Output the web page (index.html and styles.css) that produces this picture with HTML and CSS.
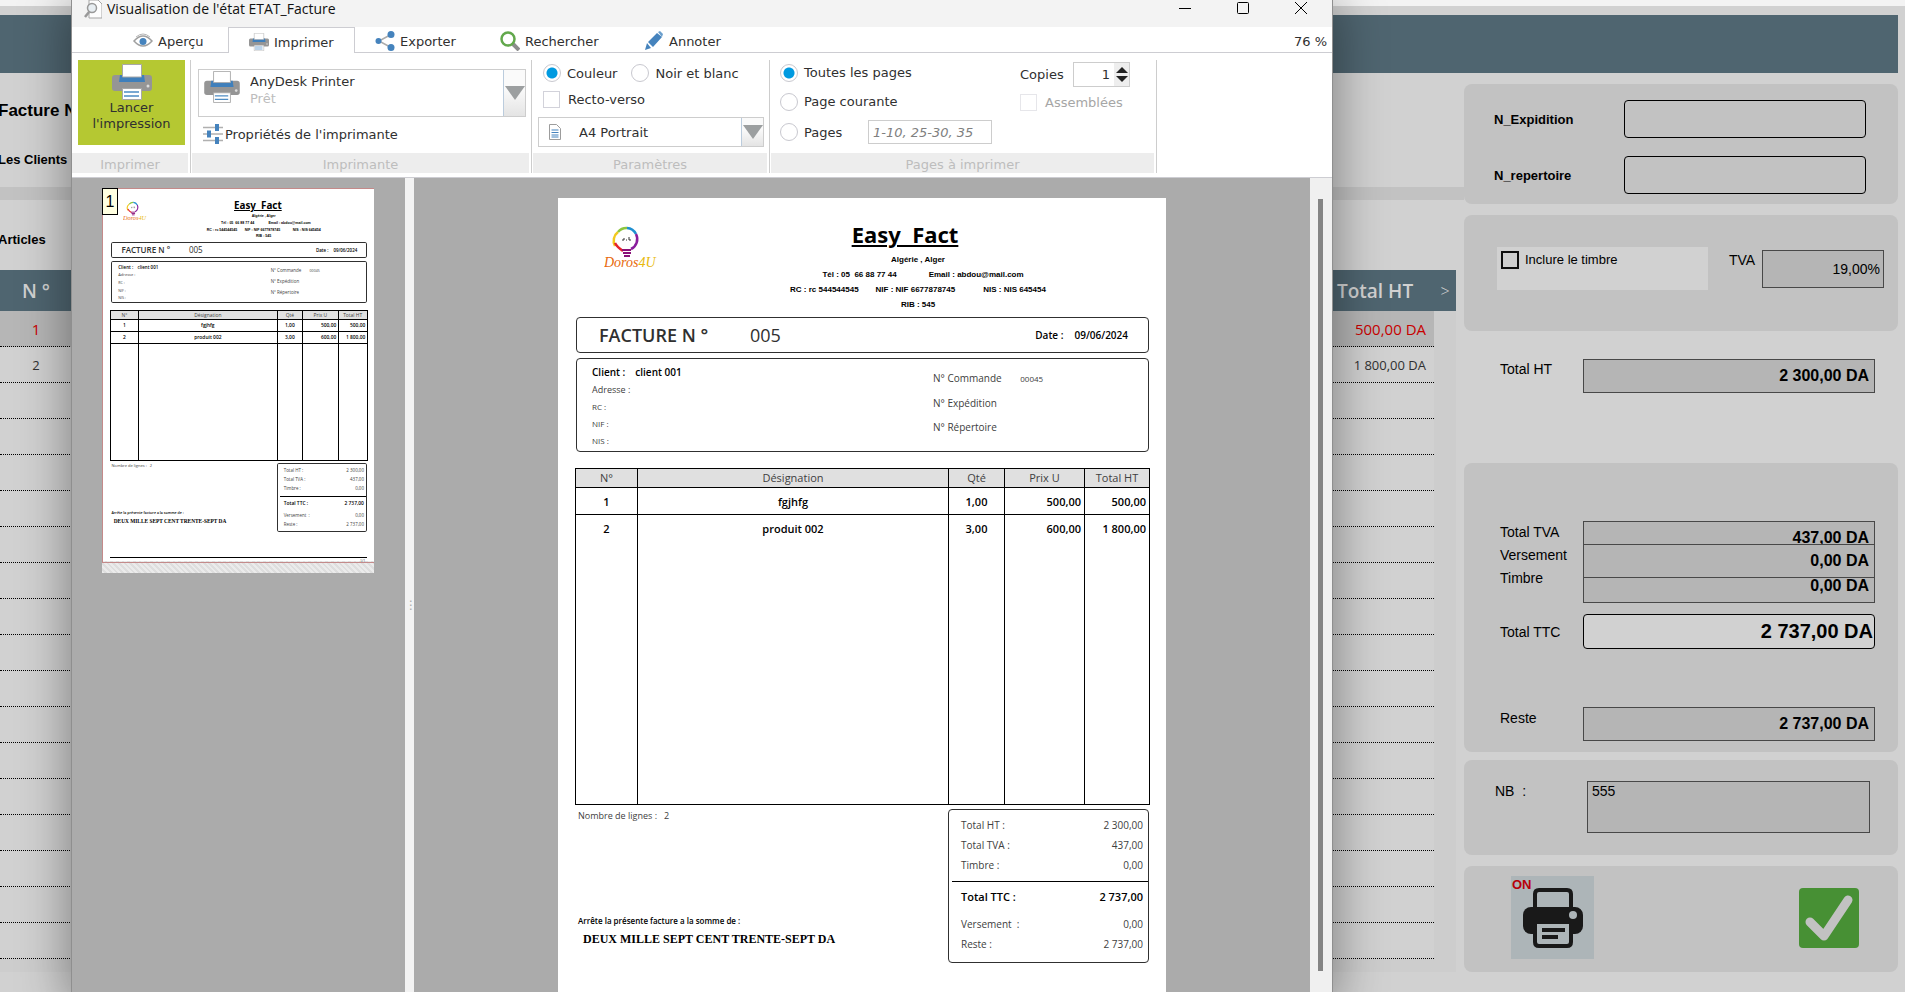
FILE: index.html
```html
<!DOCTYPE html>
<html lang="fr">
<head>
<meta charset="utf-8">
<title>Visualisation de l'état ETAT_Facture</title>
<link rel="stylesheet" href="styles.css">
</head>
<body>
<svg class="defs" aria-hidden="true">
  <symbol id="printer" viewBox="0 0 40 36">
    <path d="M3 11h34a3 3 0 0 1 3 3v10a3 3 0 0 1-3 3H3a3 3 0 0 1-3-3V14a3 3 0 0 1 3-3z" fill="#959595"/>
    <path d="M8 11h24l1 7H7z" fill="#3f7fbb"/>
    <path d="M10.500 .5h19v12.500h-19z" fill="#fff" stroke="#a8a8a8"/>
    <path d="M10.500 24.500h19v11h-19z" fill="#fff" stroke="#a8a8a8"/>
    <path d="M12 28h15M12 32h15" stroke="#4d8cc4" stroke-width="1.500"/>
    <circle cx="36" cy="22" r="1.500" fill="#ddd"/>
  </symbol>
</svg>

<div class="app">
  <div class="app-top"></div>
  <div class="app-bar"></div>
  <div class="app-body">
    <main class="app-main">
      <section class="head-left">
        <h1>Facture N°</h1>
        <h2>Les Clients</h2>
      </section>
      <div class="band"></div>
      <h2 class="articles">Articles</h2>
      <div class="lines">
        <table>
          <thead><tr><th class="c-num">N °</th><th></th><th class="c-tot">Total HT</th><th class="c-bar">&gt;</th></tr></thead>
          <tbody>
            <tr class="sel"><td>1</td><td></td><td>500,00 DA</td></tr>
            <tr><td>2</td><td></td><td>1 800,00 DA</td></tr>
            <tr><td></td><td></td><td></td></tr><tr><td></td><td></td><td></td></tr>
            <tr><td></td><td></td><td></td></tr><tr><td></td><td></td><td></td></tr>
            <tr><td></td><td></td><td></td></tr><tr><td></td><td></td><td></td></tr>
            <tr><td></td><td></td><td></td></tr><tr><td></td><td></td><td></td></tr>
            <tr><td></td><td></td><td></td></tr><tr><td></td><td></td><td></td></tr>
            <tr><td></td><td></td><td></td></tr><tr><td></td><td></td><td></td></tr>
            <tr><td></td><td></td><td></td></tr><tr><td></td><td></td><td></td></tr>
            <tr><td></td><td></td><td></td></tr><tr><td></td><td></td><td></td></tr>
          </tbody>
        </table>
      </div>
    </main>

    <aside class="side">
      <section class="panel refs">
        <label for="exp">N_Expidition</label><input id="exp" type="text">
        <label for="rep">N_repertoire</label><input id="rep" type="text">
      </section>
      <section class="panel tax">
        <label class="stamp"><input type="checkbox"> Inclure le timbre</label>
        <label class="tva-label" for="tva">TVA</label>
        <input id="tva" class="money small" type="text" value="19,00%">
      </section>
      <section class="free">
        <label for="tht">Total HT</label><input id="tht" class="money" type="text" value="2 300,00 DA">
      </section>
      <section class="panel totals">
        <div class="stack">
          <div class="stack-labels">
            <label for="ttva">Total TVA</label><label for="vers">Versement</label><label for="timb">Timbre</label>
          </div>
          <div class="stack-fields">
            <input id="ttva" class="money cut-low" type="text" value="437,00 DA">
            <input id="vers" class="money" type="text" value="0,00 DA">
            <input id="timb" class="money cut-high" type="text" value="0,00 DA">
          </div>
        </div>
        <div class="pair ttc"><label for="ttc">Total TTC</label><input id="ttc" class="big" type="text" value="2 737,00 DA"></div>
        <div class="pair rest"><label for="reste">Reste</label><input id="reste" class="money" type="text" value="2 737,00 DA"></div>
      </section>
      <section class="panel note">
        <label for="nb">NB &nbsp;:</label><textarea id="nb">555</textarea>
      </section>
      <section class="panel actions">
        <button class="print-on" type="button" aria-label="Impression ON">
          <span>ON</span>
          <svg viewBox="0 0 60 60" width="60" height="60">
            <path d="M8 19h44a8 8 0 0 1 8 8v11a8 8 0 0 1-8 8H8a8 8 0 0 1-8-8V27a8 8 0 0 1 8-8z" fill="#191919"/>
            <path d="M12 20V6q0-4 4-4h28q4 0 4 4v14" fill="#adb5b8" stroke="#191919" stroke-width="4"/>
            <path d="M10 19h40v12H10z" fill="#191919"/>
            <path d="M12 34h36v20q0 4-4 4H16q-4 0-4-4z" fill="#adb5b8" stroke="#191919" stroke-width="4"/>
            <path d="M10 30h40v4H10z" fill="#191919"/>
            <path d="M19 42h23M19 49h16" stroke="#191919" stroke-width="4"/>
            <circle cx="50" cy="27" r="4" fill="#adb5b8"/>
          </svg>
        </button>
        <button class="ok" type="button" aria-label="Valider">
          <svg viewBox="0 0 60 60" width="60" height="60">
            <rect width="60" height="60" rx="4" fill="#479034"/>
            <path d="M11 34L25 48 49 12" fill="none" stroke="#c2c2c2" stroke-width="9" stroke-linejoin="round" stroke-linecap="round"/>
          </svg>
        </button>
      </section>
    </aside>
  </div>
</div>

<div class="window">
  <header class="titlebar">
    <svg class="doc-find" viewBox="0 0 18 20" width="18" height="20"><path d="M5 0h9l4 4v14H5z" fill="#fdfdfd" stroke="#a5a5a5"/><circle cx="8" cy="8" r="4.500" fill="#e8eef2" stroke="#999" stroke-width="1.500"/><path d="M5 12l-4 5" stroke="#999" stroke-width="2.500"/></svg>
    <span class="caption">Visualisation de l'état ETAT_Facture</span>
    <button type="button" aria-label="Réduire"><svg width="14" height="14"><path d="M1 7.500h12" stroke="#000"/></svg></button>
    <button type="button" aria-label="Agrandir"><svg width="14" height="14"><rect x="1.500" y="1.500" width="11" height="11" rx="1" fill="none" stroke="#000"/></svg></button>
    <button type="button" aria-label="Fermer"><svg width="14" height="14"><path d="M1 1l12 12M13 1L1 13" stroke="#000"/></svg></button>
  </header>

  <nav class="tabs">
    <button class="tab t1" type="button"><svg viewBox="0 0 20 20" width="20" height="20"><path d="M1 10q9-10 18 0-9 10-18 0z" fill="#fff" stroke="#a0a0a0" stroke-width="1.500"/><circle cx="10" cy="10.500" r="3.500" fill="#4583bd"/><path d="M3 6q7-6 14 0" fill="none" stroke="#b5b5b5"/></svg>Aperçu</button>
    <button class="tab t2 active" type="button"><svg width="20" height="18"><use href="#printer"/></svg>Imprimer</button>
    <button class="tab t3" type="button"><svg viewBox="0 0 20 20" width="20" height="20"><path d="M16 3.500L4 10l12 6.500" fill="none" stroke="#ababab" stroke-width="1.500"/><circle cx="16" cy="3.500" r="3.500" fill="#4583bd"/><circle cx="3.500" cy="10" r="3" fill="#4583bd"/><circle cx="16" cy="16.500" r="3.500" fill="#4583bd"/></svg>Exporter</button>
    <button class="tab t4" type="button"><svg viewBox="0 0 20 20" width="20" height="20"><path d="M13 13l6 6" stroke="#8c8c8c" stroke-width="4"/><circle cx="8" cy="8" r="6.500" fill="#fff" stroke="#62a84c" stroke-width="2.500"/></svg>Rechercher</button>
    <button class="tab t5" type="button"><svg viewBox="0 0 20 20" width="20" height="20"><path d="M1 19l2-7 4 5zM4 11L13 2l5 4-9 10z" fill="#4583bd"/><path d="M14 1l2-1 3 3-1 3z" fill="#6b9fcd"/></svg>Annoter</button>
    <span class="zoom">76 %</span>
  </nav>

  <div class="ribbon">
    <section class="group g1">
      <div class="group-body"><button class="launch" type="button"><svg width="40" height="36"><use href="#printer"/></svg><span>Lancer</span><span>l'impression</span></button></div>
      <h3>Imprimer</h3>
    </section>
    <section class="group g2">
      <div class="group-body">
        <div class="combo printer-combo">
          <svg width="36" height="32"><use href="#printer"/></svg>
          <div class="printer-text"><select aria-label="Imprimante"><option>AnyDesk Printer</option></select><span>Prêt</span></div>
          <i class="arrow"></i>
        </div>
        <button class="props" type="button"><svg viewBox="0 0 20 20" width="20" height="20"><path d="M0 3.500h20M0 10h20M0 16.500h20" stroke="#b0b0b0" stroke-width="1.500"/><path d="M14 0v7M6 6.500v7M14 13v7" stroke="#4583bd" stroke-width="4"/></svg>Propriétés de l'imprimante</button>
      </div>
      <h3>Imprimante</h3>
    </section>
    <section class="group g3">
      <div class="group-body">
        <div class="modes"><label><input type="radio" name="mode" checked>Couleur</label><label><input type="radio" name="mode">Noir et blanc</label></div>
        <label class="duplex"><input type="checkbox">Recto-verso</label>
        <div class="combo paper">
          <svg viewBox="0 0 12 16" width="12" height="16"><path d="M.5.500h7l4 4v11H.5z" fill="#fff" stroke="#9c9c9c"/><path d="M2.500 6h7M2.500 8.500h7M2.500 11h7M2.500 13h7" stroke="#4583bd"/></svg>
          <select aria-label="Format"><option>A4 Portrait</option></select>
          <i class="arrow"></i>
        </div>
      </div>
      <h3>Paramètres</h3>
    </section>
    <section class="group g4">
      <div class="group-body pages">
        <div class="ranges">
          <label><input type="radio" name="range" checked>Toutes les pages</label>
          <label><input type="radio" name="range">Page courante</label>
          <div class="range"><label><input type="radio" name="range">Pages</label><input class="range-text" type="text" aria-label="Intervalle de pages" placeholder="1-10, 25-30, 35"></div>
        </div>
        <div class="copies">
          <div class="count"><label for="copies">Copies</label><div class="spin"><input id="copies" type="text" value="1"><span><i class="up"></i><i class="down"></i></span></div></div>
          <label class="off"><input type="checkbox" disabled>Assemblées</label>
        </div>
      </div>
      <h3>Pages à imprimer</h3>
    </section>
  </div>

  <div class="viewer">
    <div class="thumbs">
      <div class="thumb"><div class="mini"></div><b class="badge">1</b></div>
    </div>
    <div class="splitter">⋮</div>
    <div class="preview">
      <article class="sheet">
        <header class="sheet-head">
          <svg class="logo" viewBox="0 0 56 44" width="56" height="44">
            <g fill="none" stroke-width="2.500" transform="translate(2 0)">
              <path d="M9 21A11 11 0 0 1 12 7" stroke="#f2c91f"/><path d="M12 7a11 11 0 0 1 9-4" stroke="#8ec63f"/><path d="M21 3a11 11 0 0 1 9 6" stroke="#1f8fd0"/><path d="M30 9a11 11 0 0 1-5 15" stroke="#8a1d9c"/><path d="M9 18q2 4 8 8" stroke="#e5232c"/>
            </g>
            <path d="M18 25h9M19 28h8M20 31h6" stroke="#8a1179" stroke-width="2"/>
            <path d="M18 15h2v-2M22 15h1M25 12v3h2" stroke="#333" fill="none"/>
            <text x="0" y="42" fill="#e8690b">Doros<tspan fill="#e8b90b">4U</tspan></text>
          </svg>
          <div class="company">
            <h2>Easy&nbsp; Fact</h2>
            <p>Algérie , Alger</p>
            <p class="gap-l"><span>Tél : 05 &nbsp;66 88 77 44</span><span>Email : abdou@mail.com</span></p>
            <p class="gap-s"><span>RC : rc 544544545</span><span>NIF : NIF 6677878745</span><span class="nis">NIS : NIS 645454</span></p>
            <p>RIB : 545</p>
          </div>
        </header>
        <div class="box number"><b>FACTURE N °</b><span>005</span><time><span>Date :</span><span>09/06/2024</span></time></div>
        <div class="box client">
          <div class="who"><p class="name"><b>Client :</b><b>client 001</b></p><p class="addr">Adresse :</p><p>RC :</p><p>NIF :</p><p>NIS :</p></div>
          <div class="docs"><p>N° Commande <small>00045</small></p><p>N° Expédition</p><p>N° Répertoire</p></div>
        </div>
        <table class="items">
          <colgroup><col class="w1"><col class="w2"><col class="w3"><col class="w4"><col class="w5"></colgroup>
          <thead><tr><th>N°</th><th>Désignation</th><th>Qté</th><th>Prix U</th><th>Total HT</th></tr></thead>
          <tbody>
            <tr class="line"><td>1</td><td>fgjhfg</td><td>1,00</td><td>500,00</td><td>500,00</td></tr>
            <tr><td>2</td><td>produit 002</td><td>3,00</td><td>600,00</td><td>1 800,00</td></tr>
            <tr class="rest-rows"><td></td><td></td><td></td><td></td><td></td></tr>
          </tbody>
        </table>
        <div class="below">
          <div class="words">
            <p class="nb-lines">Nombre de lignes : &nbsp; 2</p>
            <div><p class="stop">Arrête la présente facture a la somme de :</p><p class="amount">DEUX MILLE SEPT CENT TRENTE-SEPT DA</p></div>
          </div>
          <dl class="box sums">
            <div><dt>Total HT :</dt><dd>2 300,00</dd></div>
            <div><dt>Total TVA :</dt><dd>437,00</dd></div>
            <div><dt>Timbre :</dt><dd>0,00</dd></div>
            <div class="ttc-row"><dt>Total TTC :</dt><dd>2 737,00</dd></div>
            <div><dt>Versement &nbsp;:</dt><dd>0,00</dd></div>
            <div><dt>Reste :</dt><dd>2 737,00</dd></div>
          </dl>
        </div>
        <footer class="sheet-foot">1/1</footer>
      </article>
    </div>
    <div class="scroll"><div class="thumb-bar"></div></div>
  </div>
</div>
<script src="script.js"></script>
</body>
</html>
```
FILE: script.js
```js
// The page thumbnail is a reduced copy of the invoice sheet.
document.querySelector('.mini').append(document.querySelector('.sheet').cloneNode(true));
```
FILE: styles.css
```css
* { box-sizing: border-box; }
body { margin: 0; height: 100vh; overflow: hidden; position: relative; background: #d1d1d1; font-family: "Liberation Sans", sans-serif; font-size: 14px; color: #000; }
h1, h2, h3, p, dl, dd { margin: 0; }
button { font: inherit; color: inherit; border: 0; background: none; padding: 0; }
input, select, textarea { font: inherit; color: inherit; margin: 0; }
svg { display: block; flex: none; }
.defs { position: absolute; width: 0; height: 0; }

/* Invoice form behind the preview window */
.app-top { height: 6px; background: #f3f3f3; }
.app-bar { height: 58px; margin: 9px 7px 0 0; background: #4f6570; }
.app-body { display: flex; padding-right: 7px; }
.app-main { flex: 1; min-width: 0; }
.head-left { height: 114px; padding-top: 27px; }
.head-left h1 { font-size: 17px; line-height: 22px; }
.head-left h2 { font-size: 13px; line-height: 20px; margin-top: 28px; }
.head-left h1, .head-left h2, .articles { margin-left: -2px; }
.band { height: 13px; background: #c2c2c2; }
.articles { font-size: 13px; line-height: 20px; height: 70px; padding-top: 30px; }
.lines { margin-right: 8px; height: 702px; background: #cdcdcd; }
.lines table { width: 100%; border-collapse: separate; border-spacing: 0; table-layout: fixed; font-family: "Open Sans", sans-serif; }
.lines th { height: 41px; padding: 0; background: #4f6570; color: #d1d1d1; font-size: 19px; font-weight: 600; }
.c-num { width: 72px; }
.lines .c-tot { width: 102px; padding-left: 5px; text-align: left; }
.lines .c-bar { width: 22px; font-size: 16px; font-weight: 300; }
.lines tbody { color: #303030; font-size: 13px; }
.lines td { height: 36px; padding: 0; text-align: center; border-bottom: 1px dotted #000; background: #d1d1d1; }
.lines td:last-child { text-align: right; padding-right: 8px; }
.lines .sel td { background: #b6b6b6; color: #c80000; font-size: 15px; }

.side { width: 434px; padding-top: 11px; }
.panel { background: #c2c2c2; border-radius: 8px; }
.refs { height: 120px; padding: 16px 32px 0 30px; display: grid; grid-template-columns: 130px 1fr; grid-auto-rows: 38px; row-gap: 18px; align-items: center; font-size: 13px; font-weight: bold; margin-bottom: 11px; }
.refs input { height: 38px; background: none; border: 1px solid #000; border-radius: 4px; }
.tax { height: 116px; padding: 32px 14px 0 33px; display: flex; align-items: flex-start; }
.stamp { width: 211px; height: 43px; background: #d1d1d1; padding: 4px; display: flex; align-items: flex-start; gap: 6px; font-size: 13px; line-height: 18px; }
.stamp input { appearance: none; width: 18px; height: 18px; border: 2px solid #111; }
.tva-label { margin-left: 21px; line-height: 26px; }
.money { height: 34px; width: 100%; background: #b5b5b5; border: 1px solid #484848; padding: 0 5px; text-align: right; font-size: 16px; font-weight: bold; border-radius: 0; }
.tax .small { width: 122px; height: 38px; margin: 3px 0 0 auto; padding: 0 3px; font-size: 14px; font-weight: normal; }
.free { height: 132px; padding: 28px 23px 0 36px; display: grid; grid-template-columns: 83px 1fr; align-items: start; }
.free label { line-height: 20px; }
.totals { height: 289px; padding: 58px 23px 0 36px; margin-bottom: 8px; }
.stack { display: grid; grid-template-columns: 83px 1fr; }
.stack-labels { display: flex; flex-direction: column; gap: 7px; padding-top: 3px; line-height: 16px; }
.stack-fields { display: flex; flex-direction: column; }
.stack-fields .cut-low { height: 24px; padding-top: 9px; }
.stack-fields .money + .money { margin-top: -1px; }
.stack-fields .cut-high { height: 26px; padding-bottom: 9px; }
.pair { display: grid; grid-template-columns: 83px 1fr; }
.ttc { margin-top: 11px; align-items: center; }
.big { width: 100%; height: 35px; background: #d1d1d1; border: 1px solid #000; border-radius: 4px; padding: 0 1px; text-align: right; font-size: 20px; font-weight: bold; }
.rest { margin-top: 58px; line-height: 22px; }
.note { height: 95px; padding: 21px 28px 0 31px; display: grid; grid-template-columns: 92px 1fr; align-items: start; line-height: 20px; margin-bottom: 11px; }
.note textarea { height: 52px; resize: none; background: #b5b5b5; border: 1px solid #484848; padding: 1px 4px; line-height: 16px; }
.actions { height: 106px; padding: 10px 39px 0 47px; display: flex; justify-content: space-between; align-items: flex-start; }
.print-on { position: relative; width: 83px; height: 83px; background: #adb5b8; display: grid; place-items: center; }
.print-on span { position: absolute; left: 1px; top: 1px; font-size: 13px; font-weight: bold; color: #b8000a; }
.ok { margin-top: 12px; }

/* Preview window */
.window { position: absolute; top: 0; bottom: 0; left: 72px; right: 573px; display: flex; flex-direction: column; background: #fff; box-shadow: 0 0 0 1px #8f8f8f, 0 8px 44px 6px rgba(0, 0, 0, .36); font-family: "DejaVu Sans", sans-serif; font-size: 13px; color: #303030; }
.titlebar { height: 27px; flex: none; background: #f3f3f3; display: flex; align-items: flex-start; padding: 0 2px 0 12px; color: #111; }
.caption { flex: 1; margin-left: 5px; font-family: "Open Sans", sans-serif; font-size: 14px; line-height: 17px; }
.titlebar button { width: 58px; height: 16px; display: grid; place-items: center; }
.tabs { height: 26px; flex: none; display: flex; align-items: stretch; border-bottom: 1px solid #cdcdd2; }
.tab { display: flex; align-items: center; gap: 5px; padding-top: 3px; }
.t1 { width: 156px; padding-left: 61px; }
.tab.active { width: 127px; padding-left: 20px; border: 1px solid #cdcdd2; border-bottom: 0; background: #fff; margin-bottom: -1px; }
.t3 { width: 125px; padding-left: 20px; }
.t4 { width: 144px; padding-left: 20px; }
.t5 { padding-left: 20px; }
.zoom { margin-left: auto; align-self: center; padding: 3px 5px 0 0; }
.ribbon { height: 125px; flex: none; display: flex; padding-top: 7px; border-bottom: 1px solid #cdcdd2; }
.group { height: 113px; display: flex; flex-direction: column; border-right: 1px solid #cdcdcd; padding-right: 1px; margin-right: 1px; }
.group-body { flex: 1; }
.group h3 { height: 20px; background: #ededed; color: #bdbdbd; font-size: 13px; font-weight: normal; line-height: 23px; text-align: center; margin-right: 1px; }
.g1 { width: 119px; }
.g2 { width: 340px; }
.g3 { width: 237px; }
.g4 { width: 386px; }
.launch { display: flex; flex-direction: column; align-items: center; width: 107px; height: 85px; margin-left: 6px; padding-top: 4px; background: #b5c832; line-height: 16px; }
.combo { display: flex; align-items: center; border: 1px solid #cdcdcd; background: #fff; }
.combo select { appearance: none; border: 0; background: none; padding: 0; width: 100%; }
.arrow { width: 22px; align-self: stretch; flex: none; border-left: 1px solid #bcd; background: linear-gradient(#fafafa 40%, #e4e4e4); display: grid; place-items: center; }
.arrow::before { content: ""; border: 10px solid transparent; border-top: 14px solid #9c9fa0; border-bottom: 0; }
.printer-combo { height: 48px; margin: 9px 4px 0 6px; padding-left: 5px; }
.printer-combo > svg { align-self: flex-start; margin-top: 1px; }
.printer-text { flex: 1; margin-left: 10px; line-height: 17px; padding-bottom: 6px; }
.printer-text select { display: block; }
.printer-text span { color: #bdbdbd; }
.props { display: flex; align-items: center; gap: 2px; margin: 7px 0 0 11px; }
.window label { display: flex; align-items: center; gap: 6px; }
.window input[type=radio] { appearance: none; width: 18px; height: 18px; border: 1px solid #c8c8cf; border-radius: 50%; background: #fff; }
.window input[type=radio]:checked { background: radial-gradient(circle, #009ae0 5px, #fff 6px); }
.window input[type=checkbox] { appearance: none; width: 17px; height: 17px; border: 1px solid #d2d2da; background: #fff; margin-right: 2px; }
.modes { display: flex; gap: 14px; margin: 4px 0 0 10px; }
.duplex { margin: 9px 0 0 10px; }
.paper { height: 30px; margin: 9px 4px 0 5px; padding-left: 10px; }
.paper select { flex: 1; margin-left: 18px; }
.pages { display: flex; }
.ranges { display: flex; flex-direction: column; gap: 8px; margin: 2px 0 0 9px; width: 240px; }
.ranges > label { height: 21px; }
.range { display: flex; align-items: center; height: 24px; }
.range > label { width: 88px; }
.range-text { width: 124px; height: 24px; border: 1px solid #cdcdcd; padding: 0 4px; font-style: italic; }
.range-text::placeholder { color: #808080; opacity: 1; }
.copies { margin-top: 2px; }
.count { display: flex; align-items: center; }
.count label { width: 53px; }
.spin { display: flex; width: 57px; height: 25px; border: 1px solid #cdcdcd; }
.spin input { width: 40px; border: 0; text-align: right; padding: 0 4px; }
.spin span { flex: 1; background: #eee; display: flex; flex-direction: column; align-items: center; justify-content: space-evenly; }
.up, .down { border: 6px solid transparent; }
.up { border-bottom: 6px solid #222; border-top: 0; }
.down { border-top: 6px solid #222; border-bottom: 0; }
.off { color: #a6a6a6; margin-top: 7px; }
.window .off input { border-color: #e6e6ea; }

.viewer { flex: 1; min-height: 0; display: flex; overflow: hidden; }
.thumbs { width: 333px; background: #ababab; padding: 10px 0 0 30px; }
.splitter { width: 9px; background: #f3f3f3; color: #aaa; font-size: 12px; display: grid; place-items: center; padding-top: 40px; }
.thumb { position: relative; width: 272px; height: 385px; overflow: hidden; background: repeating-linear-gradient(45deg, #ebebeb 0 2px, #dedede 2px 4px); }
.mini { zoom: .447; height: 840px; border: 4px solid #c48a8a; border-right: 0; }
.mini .sheet { height: 832px; padding-left: 16px; }
.mini .items td { border-bottom: 1px solid #000; }
.badge { position: absolute; left: 0; top: 0; width: 16px; height: 27px; border: 1px solid #000; background: #ffffe1; color: #000; font: 16px/25px "Liberation Sans", sans-serif; text-align: center; }
.preview { flex: 1; background: #ababab; padding-top: 20px; min-width: 0; }
.preview .sheet { margin: 0 auto; }
.preview .sheet-foot { display: none; }
.scroll { width: 22px; background: #f0f0f0; padding: 21px 9px 21px 8px; }
.thumb-bar { height: 100%; background: #848484; }

/* Printed invoice */
.sheet { width: 608px; height: 838px; background: #fff; padding: 0 17px; font-family: "Open Sans", sans-serif; font-size: 10px; line-height: 20px; color: #404040; display: flex; flex-direction: column; }
.sheet-head { display: flex; height: 119px; color: #000; }
.logo { margin: 27px 0 0 29px; }
.logo text { font: italic 14px "Liberation Serif", serif; }
.company { margin-left: 27px; flex: 1; text-align: center; padding-top: 22px; font: bold 8px/15px "Liberation Sans", sans-serif; }
.company h2 { font: bold 22px/28px "Noto Sans", sans-serif; text-decoration: underline; margin: 0 26px 4px 0; }
.company p { display: flex; justify-content: center; }
.gap-l { gap: 32px; padding-left: 10px; }
.gap-s { gap: 17px; }
.nis { margin-left: 11px; }
.box { border: 1px solid #303030; border-radius: 4px; margin: 0 0 0 1px; }
.number { height: 36px; display: flex; align-items: center; padding: 0 20px 0 22px; font-size: 18px; color: #303030; }
.number b { font-weight: 600; width: 151px; }
.number time { margin-left: auto; display: flex; gap: 11px; font-size: 10px; font-weight: 600; color: #000; }
.client { margin-top: 5px; height: 94px; display: flex; }
.who { width: 341px; padding: 5px 0 0 15px; font-size: 8px; line-height: 17px; }
.name { display: flex; gap: 10px; color: #000; font-size: 10px; line-height: 17px; }
.name b { font-weight: 600; }
.addr { font-size: 9px; }
.docs { padding: 7px 0 0 15px; line-height: 24px; }
.docs small { margin-left: 16px; font-size: 8px; }
.items { width: 100%; margin-top: 16px; border-collapse: collapse; table-layout: fixed; border: 1px solid #000; font-size: 11px; }
.w1 { width: 62px; } .w2 { width: 311px; } .w3 { width: 56px; } .w4 { width: 80px; } .w5 { width: 65px; }
.items th { background: #e0e0e0; height: 19px; line-height: 18px; padding: 0; font-weight: normal; border: 1px solid #000; }
.items td { height: 27px; padding: 1px 3px 0; text-align: center; border-left: 1px solid #000; color: #000; font-weight: 600; line-height: 20px; }
.items td:nth-child(n+4) { text-align: right; }
.items .line td { border-bottom: 1px solid #000; }
.items .rest-rows td { height: 263px; }
.below { display: flex; justify-content: space-between; margin-top: 4px; }
.words { padding-left: 3px; display: flex; flex-direction: column; justify-content: space-between; padding-bottom: 15px; }
.nb-lines { line-height: 14px; font-size: 9px; }
.stop { font-size: 8px; font-weight: 600; color: #000; line-height: 18px; }
.amount { font: bold 12px/18px "Liberation Serif", serif; color: #000; margin-left: 5px; }
.sums { width: 201px; height: 154px; padding: 5px 0 0; }
.sums div { display: flex; justify-content: space-between; padding: 0 5px 0 12px; }
.sums .ttc-row { border-top: 1px solid #000; margin: 6px 0 7px 3px; padding: 5px 5px 0 9px; font-size: 11px; font-weight: 600; color: #000; }
.sheet-foot { margin-top: auto; border-top: 1px solid #000; text-align: right; font-size: 8px; line-height: 14px; height: 8px; padding-right: 4px; }
```
